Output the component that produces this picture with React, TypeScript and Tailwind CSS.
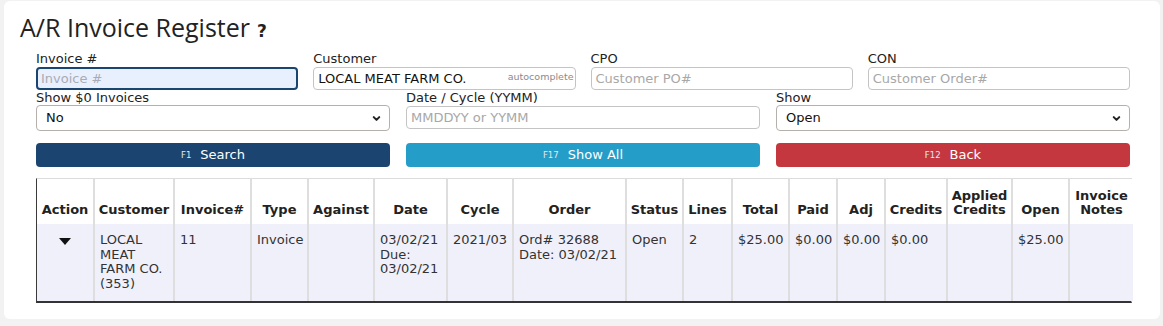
import { ChevronDown } from 'lucide-react';

const FONT = "font-['DejaVu_Sans',Verdana,sans-serif]";

const COLUMNS = [
  { key: 'action', label: ['Action'], w: 'w-[57px]' },
  { key: 'customer', label: ['Customer'], w: 'w-[80px]' },
  { key: 'invoice', label: ['Invoice#'], w: 'w-[77px]' },
  { key: 'type', label: ['Type'], w: 'w-[57px]' },
  { key: 'against', label: ['Against'], w: 'w-[66px]' },
  { key: 'date', label: ['Date'], w: 'w-[73px]' },
  { key: 'cycle', label: ['Cycle'], w: 'w-[66px]' },
  { key: 'order', label: ['Order'], w: 'w-[113px]' },
  { key: 'status', label: ['Status'], w: 'w-[57px]' },
  { key: 'lines', label: ['Lines'], w: 'w-[49px]' },
  { key: 'total', label: ['Total'], w: 'w-[57px]' },
  { key: 'paid', label: ['Paid'], w: 'w-[48px]' },
  { key: 'adj', label: ['Adj'], w: 'w-[48px]' },
  { key: 'credits', label: ['Credits'], w: 'w-[62px]' },
  { key: 'applied', label: ['Applied', 'Credits'], w: 'w-[65px]' },
  { key: 'open', label: ['Open'], w: 'w-[57px]' },
  { key: 'notes', label: ['Invoice', 'Notes'], w: 'w-[64px]' },
];

const ROW: Record<string, string[]> = {
  customer: ['LOCAL', 'MEAT', 'FARM CO.', '(353)'],
  invoice: ['11'],
  type: ['Invoice'],
  against: [],
  date: ['03/02/21', 'Due:', '03/02/21'],
  cycle: ['2021/03'],
  order: ['Ord# 32688', 'Date: 03/02/21'],
  status: ['Open'],
  lines: ['2'],
  total: ['$25.00'],
  paid: ['$0.00'],
  adj: ['$0.00'],
  credits: ['$0.00'],
  applied: [],
  open: ['$25.00'],
  notes: [],
};

function Label({ children }: { children: React.ReactNode }) {
  return <div className="h-[15px] text-[13px] leading-[15px] text-[#222]">{children}</div>;
}

function TextInput({ placeholder, value, hint }: { placeholder: string; value?: string; hint?: string }) {
  return (
    <div className="relative">
      <input
        readOnly
        value={value ?? ''}
        placeholder={placeholder}
        className={`${FONT} w-full h-[23px] rounded-[4px] border border-[#c4c4c4] bg-white px-[4px] text-[13px] text-[#111] placeholder:text-[#a8a8a8] outline-none`}
      />
      {hint && (
        <span className="absolute right-[2px] top-[5px] text-[9.5px] leading-[12px] text-[#8a8a8a]">{hint}</span>
      )}
    </div>
  );
}

function Select({ value }: { value: string }) {
  return (
    <div className="relative">
      <select
        defaultValue={value}
        className={`${FONT} w-full h-[26px] appearance-none rounded-[4px] border border-[#b5b0ac] bg-white pl-[9px] pr-6 text-[13px] text-[#111] outline-none`}
      >
        <option>{value}</option>
      </select>
      <ChevronDown className="pointer-events-none absolute right-[8px] top-[8px] h-[11px] w-[11px] text-[#222]" strokeWidth={4.5} />
    </div>
  );
}

function ActionButton({ fkey, label, color }: { fkey: string; label: string; color: string }) {
  return (
    <button className={`${color} h-[24px] rounded-[4px] flex items-center justify-center gap-[9px] text-white`}>
      <span className="text-[8.5px] text-[#e4e8ee]">{fkey}</span>
      <span className="text-[13px]">{label}</span>
    </button>
  );
}

export default function App() {
  return (
    <div className={`${FONT} h-[326px] bg-[#f2f2f2] pt-px pl-1 pr-[3px] text-[#111]`}>
      <div className="h-[318px] rounded-[6px] bg-white pl-4 pt-[10px]">
        <h1 className="flex h-[32px] items-baseline gap-[7px] font-['Open_Sans',sans-serif] text-[25px] leading-[32px] text-[#222]">
          <span>A/R Invoice Register</span>
          <span className="font-['DejaVu_Sans',sans-serif] text-[17px] font-bold">?</span>
        </h1>

        <div className="ml-4 mt-[8px] w-[1094px]">
          <div className="grid grid-cols-4 gap-x-[15px]">
            <div>
              <Label>Invoice #</Label>
              <input
                readOnly
                placeholder="Invoice #"
                className={`${FONT} w-full h-[23px] rounded-[4px] border-2 border-[#1a4570] bg-[#e8f0fe] px-[3px] text-[13px] placeholder:text-[#a8acb4] outline-none`}
              />
            </div>
            <div>
              <Label>Customer</Label>
              <TextInput placeholder="" value="LOCAL MEAT FARM CO." hint="autocomplete" />
            </div>
            <div>
              <Label>CPO</Label>
              <TextInput placeholder="Customer PO#" />
            </div>
            <div>
              <Label>CON</Label>
              <TextInput placeholder="Customer Order#" />
            </div>
          </div>

          <div className="grid grid-cols-3 gap-x-4">
            <div>
              <Label>Show $0 Invoices</Label>
              <Select value="No" />
            </div>
            <div>
              <Label>Date / Cycle (YYMM)</Label>
              <TextInput placeholder="MMDDYY or YYMM" />
            </div>
            <div>
              <Label>Show</Label>
              <Select value="Open" />
            </div>
          </div>

          <div className="mt-3 grid grid-cols-3 gap-x-4">
            <ActionButton fkey="F1" label="Search" color="bg-[#1b4570]" />
            <ActionButton fkey="F17" label="Show All" color="bg-[#259dc9]" />
            <ActionButton fkey="F12" label="Back" color="bg-[#c4373e]" />
          </div>

          <div className="mt-[11px] w-[1096px] border border-[#dcdcdc] border-l-[#3a3a3a] border-b-2 border-b-[#333]">
            <table className="w-full table-fixed border-collapse text-[13px]">
              <colgroup>
                {COLUMNS.map((c) => (
                  <col key={c.key} className={c.w} />
                ))}
              </colgroup>
              <thead>
                <tr className="h-[45px] bg-white">
                  {COLUMNS.map((c, i) => (
                    <th
                      key={c.key}
                      className={`align-bottom px-[1px] pb-[7px] text-center font-bold leading-[14px] text-[#222] ${
                        i < COLUMNS.length - 1 ? 'border-r-2 border-[#dedede]' : ''
                      }`}
                    >
                      {c.label.map((l) => (
                        <div key={l}>{l}</div>
                      ))}
                    </th>
                  ))}
                </tr>
              </thead>
              <tbody>
                <tr className="bg-[#f0f0fb]">
                  {COLUMNS.map((c, i) => (
                    <td
                      key={c.key}
                      className={`h-[77px] align-top whitespace-nowrap pl-[5px] pt-[9px] leading-[14.7px] text-[#333] ${
                        i < COLUMNS.length - 1 ? 'border-r-2 border-[#dedede]' : ''
                      }`}
                    >
                      {c.key === 'action' ? (
                        <div className="flex justify-center pr-[5px] pt-[5px]">
                          <svg width="12" height="7" viewBox="0 0 12 7">
                            <path d="M0 0 H12 L6 7 Z" fill="#111" />
                          </svg>
                        </div>
                      ) : (
                        ROW[c.key].map((l, j) => <div key={j}>{l}</div>)
                      )}
                    </td>
                  ))}
                </tr>
              </tbody>
            </table>
          </div>
        </div>
      </div>
    </div>
  );
}
